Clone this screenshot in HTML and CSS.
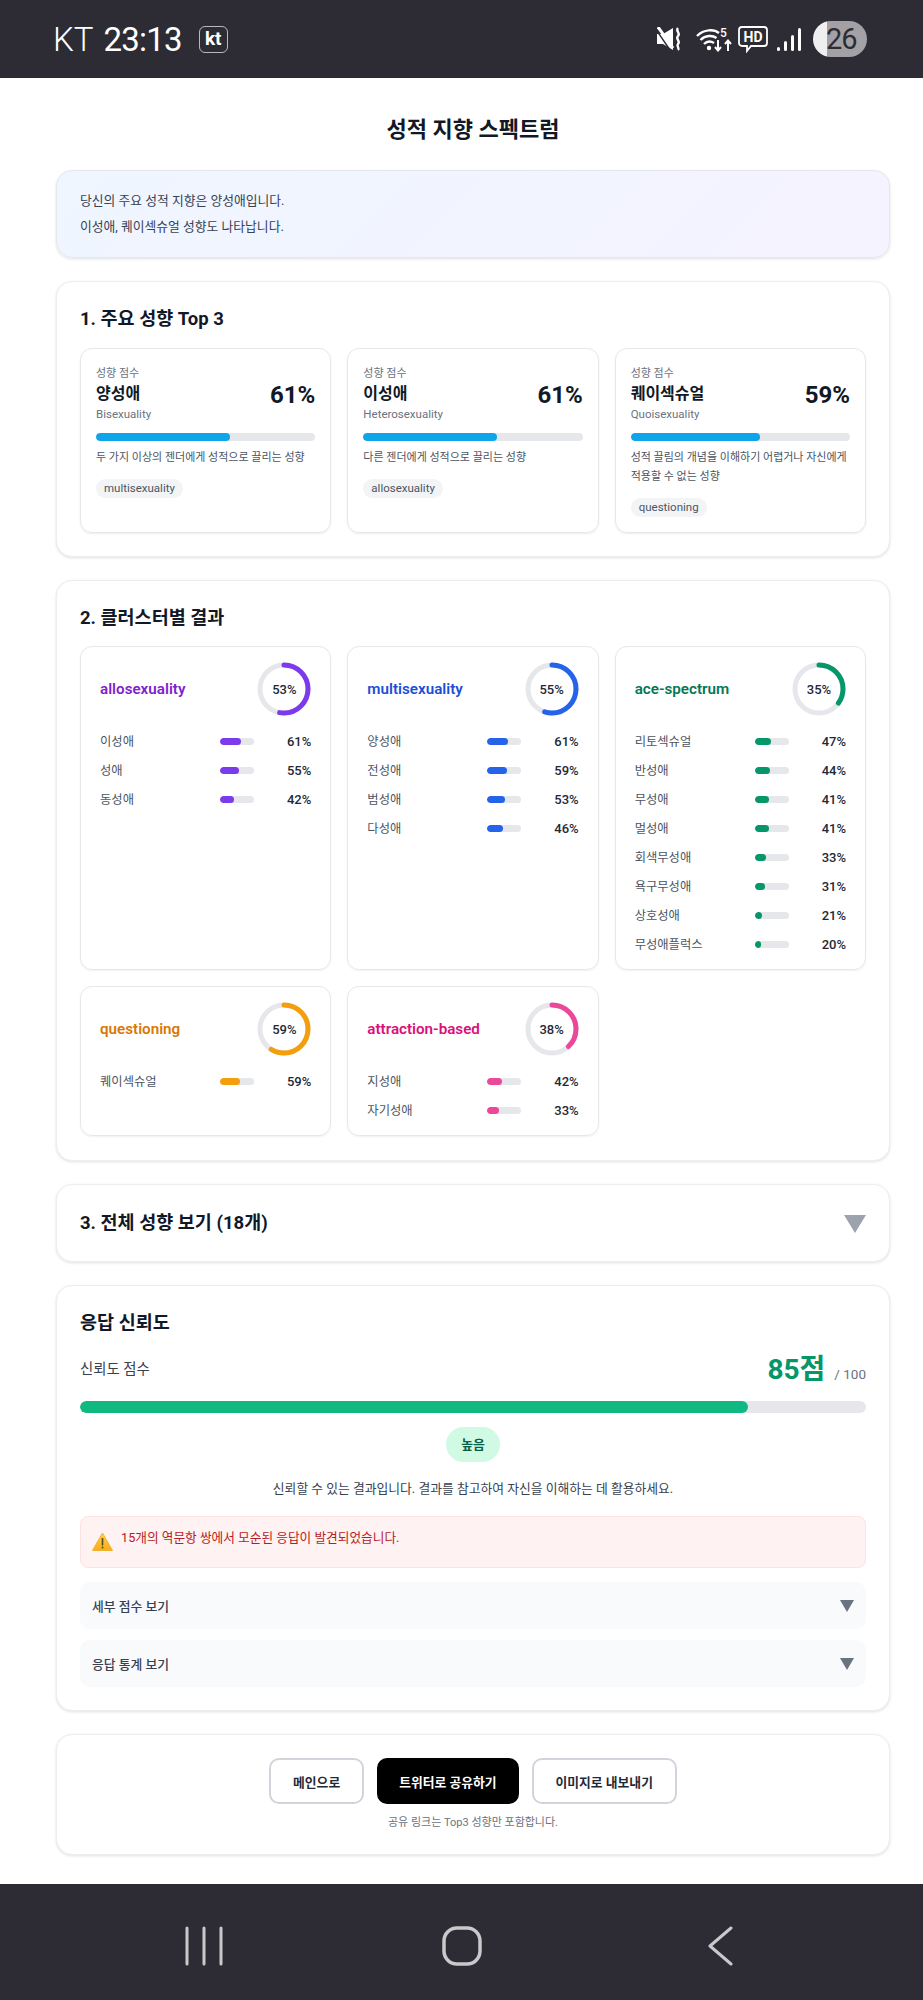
FILE: index.html
```html
<!DOCTYPE html>
<html lang="ko">
<head>
  <meta charset="UTF-8">
  <meta name="viewport" content="width=device-width, initial-scale=1.0">
  <title>성적 지향 스펙트럼</title>
  <link rel="stylesheet" href="styles.css">
</head>
<body>

  <!-- Phone status bar -->
  <div class="status-bar">
    <div class="status-left">
      <span class="carrier">KT</span>
      <span class="clock">23:13</span>
      <span class="kt-badge">kt</span>
    </div>
    <div class="status-right">
      <svg class="icon-mute" width="25" height="24" viewBox="0 0 25 24">
        <path d="M0 7h6l10-6v22l-10-6H0z" fill="#fff"/>
        <path d="M0 4l13 19" stroke="#2d2c34" stroke-width="1.400"/>
        <path d="M1 0l15 21" stroke="#fff" stroke-width="3"/>
        <path d="M21 1c-3 3 3 5 0 8s3 5 0 8c-2 2 2 4 0 6" fill="none" stroke="#fff" stroke-width="2.400"/>
      </svg>
      <svg class="icon-wifi" width="37" height="25" viewBox="0 0 37 25">
        <path d="M1 9c7-7 17-7 22-3M4.500 13c5-5 12-5 16-2M8 17c3-3 7-3 10-1" fill="none" stroke="#fff" stroke-width="2.400"/>
        <circle cx="13" cy="21" r="2.200" fill="#fff"/>
        <text x="24" y="10" class="wifi-num">5</text>
        <path d="M22 13v10M19 20l3 3.500 3-3.500M32 24V14M29 17l3-3.500 3 3.500" fill="none" stroke="#fff" stroke-width="2"/>
      </svg>
      <svg class="icon-hd" width="30" height="27" viewBox="0 0 30 27">
        <path d="M4 1h22a3 3 0 0 1 3 3v13a3 3 0 0 1-3 3H13l-4 5v-5H4a3 3 0 0 1-3-3V4a3 3 0 0 1 3-3z" fill="none" stroke="#fff" stroke-width="1.800"/>
        <text x="15" y="16" text-anchor="middle" class="hd-text">HD</text>
      </svg>
      <svg class="icon-signal" width="24" height="23" viewBox="0 0 24 23">
        <rect x="0" y="19" width="3" height="4" rx="1.500" fill="#fff"/>
        <rect x="7" y="13" width="3" height="10" rx="1.500" fill="#fff"/>
        <rect x="14" y="7" width="3" height="16" rx="1.500" fill="#fff"/>
        <rect x="21" y="0" width="3" height="23" rx="1.500" fill="#fff"/>
      </svg>
      <span class="battery">26</span>
    </div>
  </div>

  <div class="container">
    <h1>성적 지향 스펙트럼</h1>

    <!-- Summary -->
    <div class="intro">
      <p>당신의 주요 성적 지향은 양성애입니다.</p>
      <p>이성애, 퀘이섹슈얼 성향도 나타납니다.</p>
    </div>

    <!-- Top 3 -->
    <section class="panel">
      <h2>1. 주요 성향 Top 3</h2>
      <div class="top-grid">
        <div class="top-card">
          <div class="top-head">
            <div>
              <div class="top-label">성향 점수</div>
              <div class="top-name">양성애</div>
              <div class="top-eng">Bisexuality</div>
            </div>
            <div class="top-score">61%</div>
          </div>
          <div class="bar"><div class="bar-fill sky" style="width: 61%"></div></div>
          <p class="top-desc">두 가지 이상의 젠더에게 성적으로 끌리는 성향</p>
          <span class="tag">multisexuality</span>
        </div>
        <div class="top-card">
          <div class="top-head">
            <div>
              <div class="top-label">성향 점수</div>
              <div class="top-name">이성애</div>
              <div class="top-eng">Heterosexuality</div>
            </div>
            <div class="top-score">61%</div>
          </div>
          <div class="bar"><div class="bar-fill sky" style="width: 61%"></div></div>
          <p class="top-desc">다른 젠더에게 성적으로 끌리는 성향</p>
          <span class="tag">allosexuality</span>
        </div>
        <div class="top-card">
          <div class="top-head">
            <div>
              <div class="top-label">성향 점수</div>
              <div class="top-name">퀘이섹슈얼</div>
              <div class="top-eng">Quoisexuality</div>
            </div>
            <div class="top-score">59%</div>
          </div>
          <div class="bar"><div class="bar-fill sky" style="width: 59%"></div></div>
          <p class="top-desc">성적 끌림의 개념을 이해하기 어렵거나 자신에게 적용할 수 없는 성향</p>
          <span class="tag">questioning</span>
        </div>
      </div>
    </section>

    <!-- Clusters -->
    <section class="panel panel-clusters">
      <h2>2. 클러스터별 결과</h2>
      <div class="cluster-grid">

        <div class="cluster purple">
          <div class="cluster-head">
            <span class="cluster-name">allosexuality</span>
            <div class="ring">
              <svg width="54" height="54" viewBox="0 0 54 54">
                <circle class="ring-track" cx="27" cy="27" r="24"/>
                <circle class="ring-value" cx="27" cy="27" r="24" pathLength="100" stroke-dasharray="53 100"/>
              </svg>
              <span class="ring-text">53%</span>
            </div>
          </div>
          <div class="rows">
            <div class="row"><span>이성애</span><div class="mini"><div class="mini-fill" style="width: 61%"></div></div><b>61%</b></div>
            <div class="row"><span>성애</span><div class="mini"><div class="mini-fill" style="width: 55%"></div></div><b>55%</b></div>
            <div class="row"><span>동성애</span><div class="mini"><div class="mini-fill" style="width: 42%"></div></div><b>42%</b></div>
          </div>
        </div>

        <div class="cluster blue">
          <div class="cluster-head">
            <span class="cluster-name">multisexuality</span>
            <div class="ring">
              <svg width="54" height="54" viewBox="0 0 54 54">
                <circle class="ring-track" cx="27" cy="27" r="24"/>
                <circle class="ring-value" cx="27" cy="27" r="24" pathLength="100" stroke-dasharray="55 100"/>
              </svg>
              <span class="ring-text">55%</span>
            </div>
          </div>
          <div class="rows">
            <div class="row"><span>양성애</span><div class="mini"><div class="mini-fill" style="width: 61%"></div></div><b>61%</b></div>
            <div class="row"><span>전성애</span><div class="mini"><div class="mini-fill" style="width: 59%"></div></div><b>59%</b></div>
            <div class="row"><span>범성애</span><div class="mini"><div class="mini-fill" style="width: 53%"></div></div><b>53%</b></div>
            <div class="row"><span>다성애</span><div class="mini"><div class="mini-fill" style="width: 46%"></div></div><b>46%</b></div>
          </div>
        </div>

        <div class="cluster green">
          <div class="cluster-head">
            <span class="cluster-name">ace-spectrum</span>
            <div class="ring">
              <svg width="54" height="54" viewBox="0 0 54 54">
                <circle class="ring-track" cx="27" cy="27" r="24"/>
                <circle class="ring-value" cx="27" cy="27" r="24" pathLength="100" stroke-dasharray="35 100"/>
              </svg>
              <span class="ring-text">35%</span>
            </div>
          </div>
          <div class="rows">
            <div class="row"><span>리토섹슈얼</span><div class="mini"><div class="mini-fill" style="width: 47%"></div></div><b>47%</b></div>
            <div class="row"><span>반성애</span><div class="mini"><div class="mini-fill" style="width: 44%"></div></div><b>44%</b></div>
            <div class="row"><span>무성애</span><div class="mini"><div class="mini-fill" style="width: 41%"></div></div><b>41%</b></div>
            <div class="row"><span>멀성애</span><div class="mini"><div class="mini-fill" style="width: 41%"></div></div><b>41%</b></div>
            <div class="row"><span>회색무성애</span><div class="mini"><div class="mini-fill" style="width: 33%"></div></div><b>33%</b></div>
            <div class="row"><span>욕구무성애</span><div class="mini"><div class="mini-fill" style="width: 31%"></div></div><b>31%</b></div>
            <div class="row"><span>상호성애</span><div class="mini"><div class="mini-fill" style="width: 21%"></div></div><b>21%</b></div>
            <div class="row"><span>무성애플럭스</span><div class="mini"><div class="mini-fill" style="width: 20%"></div></div><b>20%</b></div>
          </div>
        </div>

        <div class="cluster orange">
          <div class="cluster-head">
            <span class="cluster-name">questioning</span>
            <div class="ring">
              <svg width="54" height="54" viewBox="0 0 54 54">
                <circle class="ring-track" cx="27" cy="27" r="24"/>
                <circle class="ring-value" cx="27" cy="27" r="24" pathLength="100" stroke-dasharray="59 100"/>
              </svg>
              <span class="ring-text">59%</span>
            </div>
          </div>
          <div class="rows">
            <div class="row"><span>퀘이섹슈얼</span><div class="mini"><div class="mini-fill" style="width: 59%"></div></div><b>59%</b></div>
          </div>
        </div>

        <div class="cluster pink">
          <div class="cluster-head">
            <span class="cluster-name">attraction-based</span>
            <div class="ring">
              <svg width="54" height="54" viewBox="0 0 54 54">
                <circle class="ring-track" cx="27" cy="27" r="24"/>
                <circle class="ring-value" cx="27" cy="27" r="24" pathLength="100" stroke-dasharray="38 100"/>
              </svg>
              <span class="ring-text">38%</span>
            </div>
          </div>
          <div class="rows">
            <div class="row"><span>지성애</span><div class="mini"><div class="mini-fill" style="width: 42%"></div></div><b>42%</b></div>
            <div class="row"><span>자기성애</span><div class="mini"><div class="mini-fill" style="width: 33%"></div></div><b>33%</b></div>
          </div>
        </div>

      </div>
    </section>

    <!-- All results (collapsed) -->
    <section class="panel panel-toggle">
      <h2>3. 전체 성향 보기 (18개)</h2>
      <span class="arrow arrow-big"></span>
    </section>

    <!-- Reliability -->
    <section class="panel">
      <h2>응답 신뢰도</h2>
      <div class="score-row">
        <span class="score-label">신뢰도 점수</span>
        <span class="score-value"><strong>85점</strong><small>/ 100</small></span>
      </div>
      <div class="score-bar"><div class="score-fill" style="width: 85%"></div></div>
      <div class="badge-wrap"><span class="badge">높음</span></div>
      <p class="score-desc">신뢰할 수 있는 결과입니다. 결과를 참고하여 자신을 이해하는 데 활용하세요.</p>
      <div class="alert">
        <svg class="alert-icon" width="21" height="19" viewBox="0 0 21 19">
          <defs>
            <linearGradient id="warn" x1="0" y1="0" x2="0" y2="1">
              <stop offset="0" stop-color="#fcd34d"/>
              <stop offset="1" stop-color="#f6ad1b"/>
            </linearGradient>
          </defs>
          <path d="M10.500 1L20.500 18.500H.5z" fill="url(#warn)" stroke="#f3b22e" stroke-linejoin="round"/>
          <rect x="9.700" y="6" width="1.600" height="7.500" fill="#5b4a1e"/>
          <circle cx="10.500" cy="15.500" r="1" fill="#5b4a1e"/>
        </svg>
        <span>15개의 역문항 쌍에서 모순된 응답이 발견되었습니다.</span>
      </div>
      <div class="fold"><span>세부 점수 보기</span><span class="arrow"></span></div>
      <div class="fold"><span>응답 통계 보기</span><span class="arrow"></span></div>
    </section>

    <!-- Actions -->
    <section class="panel panel-actions">
      <div class="buttons">
        <button class="btn">메인으로</button>
        <button class="btn btn-dark">트위터로 공유하기</button>
        <button class="btn">이미지로 내보내기</button>
      </div>
      <p class="note">공유 링크는 Top3 성향만 포함합니다.</p>
    </section>
  </div>

  <!-- Phone navigation bar -->
  <div class="nav-bar">
    <svg width="46" height="40" viewBox="0 0 46 40">
      <path d="M6 2v36M23 2v36M40 2v36" stroke="#c9c9cb" stroke-width="3" stroke-linecap="round"/>
    </svg>
    <svg width="46" height="40" viewBox="0 0 46 40">
      <rect x="5" y="2" width="36" height="36" rx="13" fill="none" stroke="#c9c9cb" stroke-width="3.500"/>
    </svg>
    <svg width="46" height="40" viewBox="0 0 46 40">
      <path d="M34 2L13 20l21 18" fill="none" stroke="#c9c9cb" stroke-width="3" stroke-linecap="round" stroke-linejoin="round"/>
    </svg>
  </div>

</body>
</html>
```

FILE: styles.css
```css
/* Global Styles */
* {
  margin: 0;
  padding: 0;
  box-sizing: border-box;
}

body {
  font-family: Roboto, "Noto Sans CJK KR", sans-serif;
  background: #fff;
  color: #111827;
  min-height: 100vh;
  display: flex;
  flex-direction: column;
}

/* Status Bar */
.status-bar {
  height: 78px;
  background: #2d2c34;
  display: flex;
  align-items: center;
  justify-content: space-between;
  padding: 0 56px 0 53px;
  color: #fff;
}

.status-left,
.status-right {
  display: flex;
  align-items: center;
}

.carrier {
  font-size: 33px;
  font-weight: 300;
  margin-right: 10px;
}

.clock {
  font-size: 33px;
  font-weight: 400;
  letter-spacing: -0.8px;
  margin-right: 17px;
}

.kt-badge {
  width: 29px;
  height: 27px;
  border: 1.5px solid #b9b9bc;
  border-radius: 6px;
  font-size: 19px;
  font-weight: 700;
  line-height: 23px;
  text-align: center;
}

.icon-mute { margin-right: 14px; }
.icon-wifi { margin-right: 5px; }
.icon-hd { margin-right: 9px; }
.icon-signal { margin-right: 12px; }

.wifi-num {
  font-size: 12px;
  font-weight: 500;
  fill: #fff;
}

.hd-text {
  font-size: 14px;
  font-weight: 700;
  fill: #fff;
}

.battery {
  width: 54px;
  height: 36px;
  border-radius: 18px;
  background: linear-gradient(to right, #efeff0 14px, #a3a1a6 14px);
  color: #2d2c34;
  font-size: 29px;
  line-height: 36px;
  padding-left: 13px;
  letter-spacing: -1px;
}

/* Page */
.container {
  flex: 1;
  padding: 36px 33px 0 56px;
}

h1 {
  font-size: 22px;
  font-weight: 700;
  line-height: 32px;
  text-align: center;
  margin-bottom: 24px;
}

.intro {
  background: linear-gradient(135deg, #eff6ff, #f5f3ff);
  border: 1px solid #e5e7eb;
  border-radius: 16px;
  box-shadow: 0 1px 3px rgba(0, 0, 0, 0.12);
  padding: 17px 23px;
  margin-bottom: 23px;
  font-size: 12.8px;
  line-height: 26px;
  color: #374151;
}

.panel {
  background: #fff;
  border: 1px solid #eceef1;
  border-radius: 16px;
  box-shadow: 0 1px 3px rgba(0, 0, 0, 0.12);
  padding: 23px;
  margin-bottom: 23px;
}

h2 {
  font-size: 18.5px;
  font-weight: 700;
  line-height: 28px;
  margin-bottom: 15px;
  color: #111827;
}

/* Top 3 */
.top-grid {
  display: grid;
  grid-template-columns: repeat(3, 1fr);
  gap: 16px;
}

.top-card {
  border: 1px solid #e5e7eb;
  border-radius: 12px;
  box-shadow: 0 1px 2px rgba(0, 0, 0, 0.08);
  padding: 18px 15px 15px;
}

.top-head {
  display: flex;
  justify-content: space-between;
  align-items: center;
  margin-bottom: 11px;
}

.top-label {
  font-size: 11px;
  line-height: 13px;
  color: #6b7280;
}

.top-name {
  font-size: 16px;
  font-weight: 700;
  line-height: 27px;
}

.top-eng {
  font-size: 11.5px;
  line-height: 15px;
  color: #6b7280;
}

.top-score {
  font-size: 24px;
  font-weight: 700;
  color: #111827;
}

.bar {
  height: 8px;
  background: #e5e7eb;
  border-radius: 4px;
  overflow: hidden;
}

.bar-fill {
  height: 100%;
  border-radius: 4px;
}

.sky {
  background: #0ea5e9;
}

.top-desc {
  font-size: 11px;
  line-height: 19px;
  color: #4b5563;
  margin: 7px 0 12px;
}

.tag {
  display: inline-block;
  font-size: 11.5px;
  line-height: 19px;
  padding: 0 8px;
  background: #f3f4f6;
  border-radius: 10px;
  color: #4b5563;
  vertical-align: top;
}

/* Clusters */
.panel-clusters {
  padding-bottom: 24px;
}

.panel-clusters h2 {
  margin-bottom: 14px;
}

.cluster-grid {
  display: grid;
  grid-template-columns: repeat(3, 1fr);
  gap: 16px;
}

.cluster {
  border: 1px solid #e5e7eb;
  border-radius: 12px;
  box-shadow: 0 1px 2px rgba(0, 0, 0, 0.06);
  padding: 15px 19px;
}

.cluster-head {
  display: flex;
  justify-content: space-between;
  align-items: center;
  margin-bottom: 15px;
}

.cluster-name {
  font-size: 15.2px;
  font-weight: 600;
}

.ring {
  position: relative;
  width: 54px;
  height: 54px;
}

.ring svg {
  display: block;
  transform: rotate(-90deg);
}

.ring-track,
.ring-value {
  fill: none;
  stroke-width: 5;
}

.ring-track {
  stroke: #e5e7eb;
}

.ring-value {
  stroke-linecap: round;
}

.ring-text {
  position: absolute;
  inset: 0;
  display: flex;
  align-items: center;
  justify-content: center;
  font-size: 13px;
  font-weight: 500;
  color: #1f2937;
}

.rows {
  display: flex;
  flex-direction: column;
  gap: 9px;
}

.row {
  display: grid;
  grid-template-columns: 120px 34px 1fr;
  align-items: center;
  height: 20px;
  font-size: 12.3px;
  color: #4b5563;
}

.row b {
  font-size: 13px;
  font-weight: 500;
  text-align: right;
  color: #1f2937;
}

.mini {
  height: 7px;
  background: #e5e7eb;
  border-radius: 4px;
  overflow: hidden;
}

.mini-fill {
  height: 100%;
  border-radius: 4px;
}

.purple .cluster-name { color: #7e22ce; }
.purple .ring-value { stroke: #7c3aed; }
.purple .mini-fill { background: #7c3aed; }

.blue .cluster-name { color: #1d4ed8; }
.blue .ring-value { stroke: #2563eb; }
.blue .mini-fill { background: #2563eb; }

.green .cluster-name { color: #047857; }
.green .ring-value { stroke: #059669; }
.green .mini-fill { background: #059669; }

.orange .cluster-name { color: #d97706; }
.orange .ring-value { stroke: #f59e0b; }
.orange .mini-fill { background: #f59e0b; }

.pink .cluster-name { color: #db0f7b; }
.pink .ring-value { stroke: #ec4899; }
.pink .mini-fill { background: #ec4899; }

/* Collapsed panel */
.panel-toggle {
  display: flex;
  justify-content: space-between;
  align-items: center;
  padding: 24px 23px;
}

.panel-toggle h2 {
  margin-bottom: 0;
}

.arrow {
  width: 0;
  height: 0;
  border-left: 7px solid transparent;
  border-right: 7px solid transparent;
  border-top: 12px solid #6b7280;
}

.arrow-big {
  border-left-width: 11px;
  border-right-width: 11px;
  border-top: 18px solid #9ca3af;
  margin-top: 2px;
}

/* Reliability */
.score-row {
  display: flex;
  justify-content: space-between;
  align-items: center;
  height: 36px;
  margin-top: -3px;
  margin-bottom: 16px;
}

.score-label {
  font-size: 14.4px;
  color: #374151;
}

.score-value strong {
  font-size: 28px;
  font-weight: 700;
  color: #059669;
}

.score-value small {
  font-size: 13.5px;
  color: #6b7280;
  margin-left: 9px;
}

.score-bar {
  height: 12px;
  background: #e5e7eb;
  border-radius: 6px;
  overflow: hidden;
}

.score-fill {
  height: 100%;
  background: #10b981;
  border-radius: 6px;
}

.badge-wrap {
  display: flex;
  justify-content: center;
  margin-top: 14px;
}

.badge {
  width: 54px;
  height: 35px;
  border-radius: 18px;
  background: #d1fae5;
  color: #065f46;
  font-size: 12.8px;
  font-weight: 700;
  line-height: 35px;
  text-align: center;
}

.score-desc {
  font-size: 12.8px;
  line-height: 20px;
  text-align: center;
  color: #374151;
  margin: 17px 0;
}

.alert {
  display: flex;
  align-items: flex-start;
  height: 52px;
  background: #fef2f2;
  border: 1px solid #fee2e2;
  border-radius: 8px;
  padding: 12px 11px;
  font-size: 12.7px;
  line-height: 18px;
  color: #b91c1c;
  margin-bottom: 14px;
}

.alert-icon {
  flex: none;
  margin: 3px 8px 0 0;
}

.fold {
  display: flex;
  justify-content: space-between;
  align-items: center;
  height: 47px;
  background: #f9fafb;
  border-radius: 10px;
  padding: 0 12px;
  font-size: 12.8px;
  font-weight: 500;
  color: #374151;
  margin-bottom: 11px;
}

.fold:last-child {
  margin-bottom: 0;
}

/* Actions */
.buttons {
  display: flex;
  justify-content: center;
  gap: 13px;
}

.btn {
  height: 46px;
  padding: 0 22px;
  border: 2px solid #d1d5db;
  border-radius: 10px;
  background: #fff;
  color: #1f2937;
  font-family: inherit;
  font-size: 12.8px;
  font-weight: 600;
}

.btn-dark {
  padding: 0 20px;
  background: #000;
  border-color: #000;
  color: #fff;
}

.note {
  font-size: 11px;
  line-height: 16px;
  text-align: center;
  color: #6b7280;
  margin-top: 11px;
}

/* Navigation Bar */
.nav-bar {
  height: 116px;
  background: #2d2c34;
  display: flex;
  align-items: center;
  justify-content: space-between;
  padding: 8px 180px 0 181px;
}
```
